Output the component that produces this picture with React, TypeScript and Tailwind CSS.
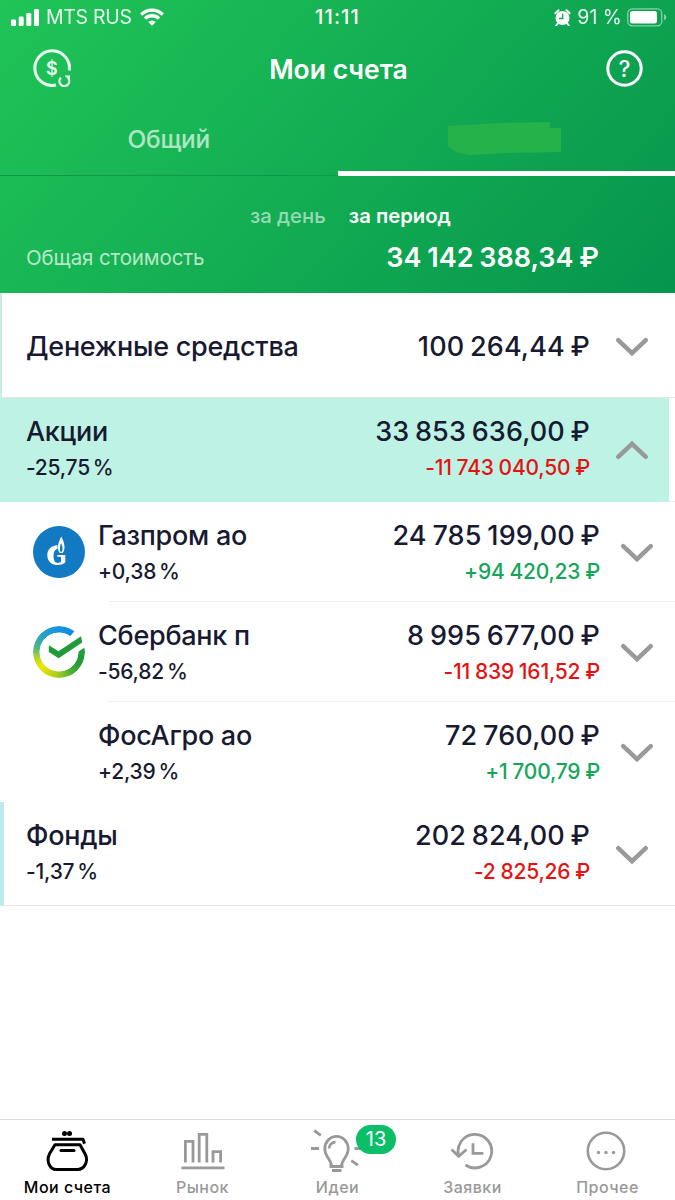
import type { ReactNode } from 'react';
import { clsx } from 'clsx';

type Holding = {
    name: string;
    percent?: string;
    value: string;
    change?: string;
    logo?: ReactNode;
};

const GROUPS: Record<'cash' | 'stocks' | 'funds', Holding> = {
    cash: { name: 'Денежные средства', value: '100 264,44 ₽' },
    stocks: { name: 'Акции', percent: '-25,75 %', value: '33 853 636,00 ₽', change: '-11 743 040,50 ₽' },
    funds: { name: 'Фонды', percent: '-1,37 %', value: '202 824,00 ₽', change: '-2 825,26 ₽' },
};

const STOCKS: Holding[] = [
    { name: 'Газпром ао', percent: '+0,38 %', value: '24 785 199,00 ₽', change: '+94 420,23 ₽', logo: <GazpromLogo /> },
    { name: 'Сбербанк п', percent: '-56,82 %', value: '8 995 677,00 ₽', change: '-11 839 161,52 ₽', logo: <SberLogo /> },
    { name: 'ФосАгро ао', percent: '+2,39 %', value: '72 760,00 ₽', change: '+1 700,79 ₽' },
];

const TABS = [
    { label: 'Мои счета', icon: <PurseIcon /> },
    { label: 'Рынок', icon: <MarketIcon /> },
    { label: 'Идеи', icon: <IdeaIcon />, badge: 13 },
    { label: 'Заявки', icon: <HistoryIcon /> },
    { label: 'Прочее', icon: <MoreIcon /> },
];

function GazpromLogo() {
    return (
        <svg className="size-[52px]" viewBox="0 0 52 52">
            <circle cx="26" cy="26" r="26" fill="#127ac2" />
            <path fill="#fff" d="M24.5 19.3C18 19.6 14.3 23.6 14.3 29.2s4 9.8 10 9.8c3.5 0 6-.8 8-2.5V29h-8v1.8h3c.6 0 .8.3.8.8v4.2c-.9.8-2 1.1-3.2 1.1-2.9 0-4.4-2.4-4.4-6.9 0-4.3 1.400-6.700 4-7.200z" />
            <path fill="#fff" fillRule="evenodd" d="M28.2 10.5c2.4 4 3.3 7.5 3.3 10.5 0 2.6-.7 4.8-2 6h-2.6c-1.3-1.3-2-3.2-2-5.5 0-3.5 1.7-7.5 3.3-11zM28.2 17c-1 2.500-1.300 4.200-1.300 6 0 1.500.4 2.600 1.300 3.400.9-.8 1.300-1.900 1.300-3.400 0-1.800-.3-3.500-1.300-6z" />
        </svg>
    );
}

function SberLogo() {
    return (
        <div className="relative size-[52px]">
            <div className="size-full rounded-full bg-[conic-gradient(from_0deg,#1493e0_0deg,#1389e2_40deg,#1f9f3e_60deg,#239b38_120deg,#4fb032_150deg,#a8cf1d_185deg,#f0e60a_230deg,#c8dc18_250deg,#4fb784_280deg,#27a3c4_315deg,#1493e0_360deg)] [mask-image:radial-gradient(circle,transparent_19.2px,black_19.8px)]" />
            <svg className="absolute inset-0" viewBox="0 0 52 52">
                <path fill="#fff" d="M36 11.5 42.5 4 53-1v21.5L44 26.5 36 26z" />
                <path fill="#219b38" d="M15.8 19.3 25.5 25.2 48 10.2 49.2 16.4 25.7 32.3 15.8 26z" />
            </svg>
        </div>
    );
}

function Chevron({ up }: { up?: boolean }) {
    return (
        <svg className={clsx('w-[34px] h-5 shrink-0', up && 'rotate-180')} viewBox="0 0 34 20" fill="none" stroke="#999" strokeWidth="4.5" strokeLinecap="round">
            <path d="M3.2 3.2 17 16.2 30.8 3.2" />
        </svg>
    );
}

function Names({ item }: { item: Holding }) {
    return (
        <div>
            <p className="text-[27px] leading-9 font-medium tracking-[-0.01em]">{item.name}</p>
            {item.percent && <p className="text-[21px] leading-[35px] font-medium tracking-[-0.01em] [word-spacing:-2.5px]">{item.percent}</p>}
        </div>
    );
}

function Amounts({ item }: { item: Holding }) {
    return (
        <div className="ml-auto text-right">
            <p className="text-[27px] leading-9 font-medium tracking-[0.004em] [word-spacing:-1.5px]">{item.value}</p>
            {item.change && (
                <p className={clsx('text-[21px] leading-[35px] font-medium tracking-[-0.01em] [word-spacing:-0.5px]', item.change.startsWith('-') ? 'text-[#e61212]' : 'text-[#14a659]')}>
                    {item.change}
                </p>
            )}
        </div>
    );
}

function StatusBar() {
    return (
        <div className="grid grid-cols-3 items-center h-[34px] text-[20px] leading-[34px]">
            <div className="flex items-center pl-[11px]">
                <svg className="w-7 h-[17px]" viewBox="0 0 28 17" fill="#fff">
                    <rect x="0" y="10.5" width="5" height="6.5" rx="1.3" />
                    <rect x="7.7" y="7.5" width="5" height="9.5" rx="1.3" />
                    <rect x="15.3" y="4" width="5" height="13" rx="1.3" />
                    <rect x="23" y="0" width="5" height="17" rx="1.3" />
                </svg>
                <span className="ml-[7px] text-[19.5px] tracking-[-0.015em] opacity-90 whitespace-nowrap">MTS RUS</span>
                <svg className="ml-2 w-6 h-[18px]" viewBox="0 0 24 18" fill="none" stroke="#fff" strokeWidth="3.4">
                    <path d="M1.2 6.6a15.3 15.3 0 0 1 21.6 0" />
                    <path d="M5.1 10.6a9.8 9.8 0 0 1 13.8 0" />
                    <path d="M12 17.8 8.2 14a5.4 5.4 0 0 1 7.6 0z" fill="#fff" stroke="none" />
                </svg>
            </div>
            <span className="text-center font-medium tracking-[0.055em]">11:11</span>
            <div className="flex items-center justify-end pr-2">
                <svg className="w-[17px] h-[17px]" viewBox="0 0 16 17">
                    <circle cx="8" cy="9" r="7" fill="#fff" />
                    <path d="M.9 4.2 4 1.3M15.1 4.2 12 1.3M3.2 14.5l-1.5 2M12.8 14.5l1.5 2" stroke="#fff" strokeWidth="2" strokeLinecap="round" />
                    <path d="M8.2 4.5v5H4.5" stroke="#12a954" strokeWidth="1.3" fill="none" />
                </svg>
                <span className="ml-[6px] text-[19.5px] opacity-90 whitespace-nowrap">91 %</span>
                <svg className="ml-[5px] w-10 h-[19px]" viewBox="0 0 40 19">
                    <rect x=".8" y=".8" width="34" height="17" rx="4.5" fill="none" stroke="#fff" strokeOpacity=".5" strokeWidth="1.3" />
                    <rect x="3" y="3" width="27" height="12.6" rx="2.5" fill="#fff" />
                    <path d="M37 6.3c3 1.2 3 4.8 0 6z" fill="#fff" fillOpacity=".5" />
                </svg>
            </div>
        </div>
    );
}

function PurseIcon() {
    return (
        <svg className="w-11 h-10 mr-[2px]" viewBox="0 0 44 40" fill="none" stroke="#000" strokeWidth="3" strokeLinejoin="round">
            <circle cx="19.5" cy="2.6" r="2.5" fill="#000" stroke="none" />
            <circle cx="24.5" cy="2.6" r="2.5" fill="#000" stroke="none" />
            <path d="M7 8.3h31l1.5 4.5" />
            <path d="M10 13.8h25l5 9c4 7-.5 15.7-7.5 15.7H11.5C4.5 38.5 1 30 4.500 22.800z" />
            <path d="M16 19.6h13" strokeLinecap="round" />
        </svg>
    );
}

function MarketIcon() {
    return (
        <svg className="w-11 h-10" viewBox="0 0 44 40" fill="none" stroke="#999" strokeWidth="2.8">
            <path d="M4.4 31.5V10.3h7.6v21.2M18.2 31.5V3.4h7.6v28.1M32 31.5V20.7h7.6v10.8M.5 36.8h43" />
        </svg>
    );
}

function IdeaIcon() {
    return (
        <svg className="w-[54px] h-[42px] overflow-visible" viewBox="0 0 54 42" fill="none" stroke="#999" strokeWidth="2.8">
            <path d="M20.5 35c0-6.5-6.7-9-6.7-17.3a11.7 12.3 0 0 1 23.4 0c0 8.3-6.7 10.8-6.7 17.3" />
            <path d="M18 17.5a7 7 0 0 1 6.5-6.5M18.5 35.5h14M21 39.5h9.5M0 17.5h8M3.2-.5l6.6 4.8M43.5 17.5H51M40.3 29.7l6.6 4.5" />
        </svg>
    );
}

function HistoryIcon() {
    return (
        <svg className="w-11 h-10 mr-[2px]" viewBox="0 0 44 40" fill="none" stroke="#999" strokeWidth="2.8">
            <path d="M9 25.5A16.8 16.8 0 1 1 15.5 34" />
            <path d="M1.5 18.5l7.2 6.8L16.5 18.5M23 12.3v10h10.3" />
        </svg>
    );
}

function MoreIcon() {
    return (
        <svg className="w-10 h-10 mr-[3px]" viewBox="0 0 40 40" fill="#999">
            <circle cx="20" cy="20" r="18.2" fill="none" stroke="#999" strokeWidth="2.6" />
            <circle cx="12.5" cy="21.5" r="1.7" />
            <circle cx="20" cy="21.5" r="1.7" />
            <circle cx="27.5" cy="21.5" r="1.7" />
        </svg>
    );
}

export default function App() {
    return (
        <div className="flex flex-col w-[675px] h-[1200px] overflow-hidden bg-white text-[#181a31] font-[Inter,'Noto_Sans',sans-serif]">
            {/* Header */}
            <header className="h-[293px] shrink-0 text-white bg-[linear-gradient(132deg,#20c457_0%,#13ad53_50%,#05954d_100%)]">
                <StatusBar />
                <div className="flex items-center justify-between h-[70px] pl-[33px] pr-8 pb-[2px]">
                    <svg className="size-[38px]" viewBox="0 0 38 38" fill="none" stroke="#e9fff0" strokeWidth="3">
                        <path d="M36.3 21.5A17.3 17.3 0 1 0 23 36" />
                        <path d="M28 28.6a4.900 4.900 0 1 0 7.600 1.200" strokeWidth="2.2" />
                        <path d="M37 26.500v5.500l-5.500-5.500z" fill="#e9fff0" stroke="none" />
                        <text x="18.8" y="25.5" textAnchor="middle" fill="#e9fff0" stroke="none" fontSize="18" fontWeight="600">$</text>
                    </svg>
                    <h1 className="pt-[3px] text-[26.5px] font-semibold">Мои счета</h1>
                    <svg className="size-[37px]" viewBox="0 0 37 37">
                        <circle cx="18.5" cy="18.5" r="16.7" fill="none" stroke="#fff" strokeWidth="3" />
                        <text x="18.5" y="26.5" textAnchor="middle" fill="#fff" fontSize="22.5" fontWeight="500">?</text>
                    </svg>
                </div>
                <div className="grid grid-cols-2 h-[72px] font-medium">
                    <div className="border-b border-[#12984a] text-center text-[24.5px] tracking-[-0.01em] leading-[70px] text-white/65">Общий</div>
                    <div className="flex justify-center border-b-[5px] border-white pt-[18px] pr-1">
                        {/* account name painted over */}
                        <svg className="w-[113px] h-[33px]" viewBox="0 0 113 33">
                            <path fill="#25b24b" d="M0 4 52 1 102 0v6h11v24l-53 1-38 2-14-3-8-6z" />
                        </svg>
                    </div>
                </div>
                <div className="flex gap-[23px] pt-[21px] pl-[250px] text-[20.3px] leading-[38px]">
                    <span className="font-medium text-white/55">за день</span>
                    <span className="font-semibold">за период</span>
                </div>
                <div className="flex justify-between items-center h-[46px] pl-[26px] pr-[76px]">
                    <span className="text-[20.5px] tracking-[-0.006em] text-white/70">Общая стоимость</span>
                    <span className="text-[27px] font-semibold [word-spacing:-1px]">34 142 388,34 ₽</span>
                </div>
            </header>

            {/* Portfolio */}
            <main className="flex-1">
                <div className="flex items-center h-[105px] border-l-2 border-b border-l-[#c5eee3] border-b-[#e5e5e5] pt-[3px] pl-6 pr-[26px]">
                    <Names item={GROUPS.cash} />
                    <Amounts item={GROUPS.cash} />
                    <div className="ml-[25px]"><Chevron /></div>
                </div>
                <div className="h-[104px] border-b border-[#eee]">
                    <div className="flex items-center w-[669px] h-[104px] bg-[#bdf2e4] pb-px pl-[26px] pr-5">
                        <Names item={GROUPS.stocks} />
                        <Amounts item={GROUPS.stocks} />
                        <div className="ml-[25px]"><Chevron up /></div>
                    </div>
                </div>
                {STOCKS.map((item, i) => (
                    <div key={item.name} className="h-[100px]">
                        <div className="flex items-center h-[99px] pl-[33px] pr-[21px]">
                            <div className="w-[65px]">{item.logo}</div>
                            <div className="flex flex-1 pt-[4px]">
                                <Names item={item} />
                                <Amounts item={item} />
                            </div>
                            <div className="ml-5 pt-[2px]"><Chevron /></div>
                        </div>
                        {i < STOCKS.length - 1 && <div className="ml-[108px] h-px bg-[#f0f0f0]" />}
                    </div>
                ))}
                <div className="flex items-center h-[104px] border-l-4 border-b border-l-[#bdeaf0] border-b-[#e5e5e5] pl-[22px] pr-[26px]">
                    <Names item={GROUPS.funds} />
                    <Amounts item={GROUPS.funds} />
                    <div className="ml-[25px] pt-[3px]"><Chevron /></div>
                </div>
            </main>

            {/* Bottom navigation */}
            <nav className="grid grid-cols-5 h-[81px] shrink-0 border-t border-[#dcdcdc]">
                {TABS.map((tab, i) => (
                    <div key={tab.label} className={clsx('relative flex flex-col items-center pt-[11px]', i === 0 ? 'text-black' : 'text-[#999]')}>
                        <div className="flex justify-center h-[42px]">{tab.icon}</div>
                        <span className="text-[16px] leading-[29px] font-medium tracking-[0.03em]">{tab.label}</span>
                        {tab.badge && (
                            <span className="absolute left-[86px] top-[5px] w-10 h-[29px] rounded-full bg-[#0bbf68] text-white text-[20px] leading-[29px] text-center">
                                {tab.badge}
                            </span>
                        )}
                    </div>
                ))}
            </nav>
        </div>
    );
}
